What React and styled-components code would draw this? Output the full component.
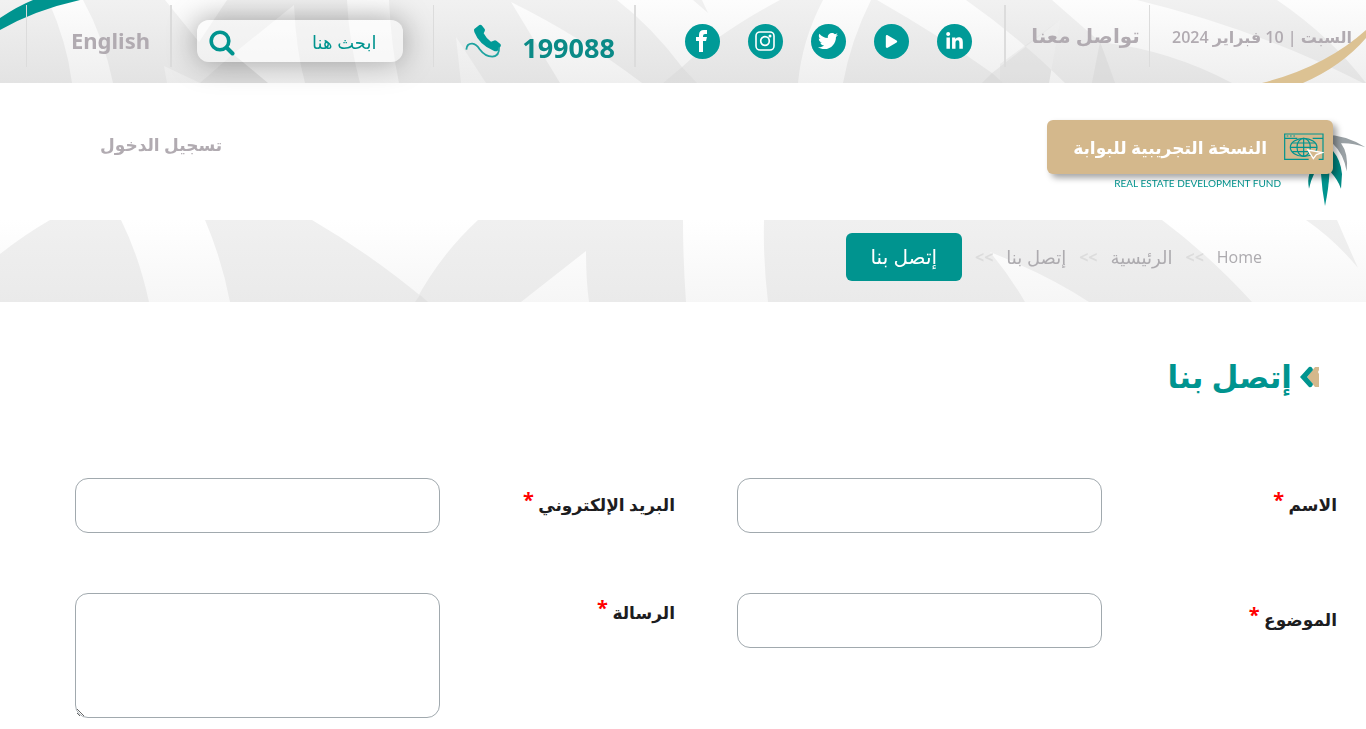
import React from "react";
import styled, { createGlobalStyle } from "styled-components";
import { FaTwitter, FaPlay, FaLinkedinIn } from "react-icons/fa";

const teal = "#00948f";
const muted = "#b1abb1";

const GlobalStyle = createGlobalStyle`
  *, *::before, *::after {
    box-sizing: border-box;
  }
  body {
    margin: 0;
    background: #fff;
    color: #1d1d1f;
    font-family: "Open Sans", "DejaVu Sans", sans-serif;
    overflow-x: hidden;
  }
  a {
    color: inherit;
    text-decoration: none;
  }
`;

const links = [
  { name: "LinkedIn", icon: <FaLinkedinIn size={19} /> },
  { name: "YouTube", icon: <FaPlay size={13} /> },
  { name: "Twitter", icon: <FaTwitter size={20} /> },
  { name: "Instagram", icon: <InstagramIcon /> },
  { name: "Facebook", icon: <FacebookIcon /> },
];

function InstagramIcon() {
  return (
    <svg width="20" height="20" viewBox="0 0 20 20" fill="none" stroke="#fff">
      <rect x="1" y="1" width="18" height="18" rx="4" strokeWidth="1.6" />
      <circle cx="10" cy="10" r="4.3" strokeWidth="1.7" />
      <circle cx="15" cy="5" r="1.5" fill="#fff" stroke="none" />
    </svg>
  );
}

function FacebookIcon() {
  return (
    <svg width="12" height="22" viewBox="0 0 12 22" fill="#fff">
      <path d="M3 22 V11 H0 V7 H3 V5 Q3 0 8 0 H11 V4 H9 Q7 4 7 6 V7 H11 L10 11 H7 V22Z" />
    </svg>
  );
}

const PhoneIcon = () => (
  <svg width="37" height="35" viewBox="0 0 111 105" aria-hidden="true">
    <path
      fill="#009a97"
      d="M28 15 L43 3 Q47 1 50 4 L59 15 Q61 18 59 22 L56 28 Q64 44 78 53 L86 50 Q90 47 94 50 L106 60 Q109 63 107 67 L98 80 Q93 83 86 80 Q43 63 28 24 Q26 17 28 15Z"
    />
    <path
      fill="none"
      stroke="#1fa3a0"
      strokeWidth="5.5"
      d="M4 77 Q5 58 22 59 Q34 60 44 76 Q60 98 82 98 Q104 96 102 70"
    />
  </svg>
);

const SearchIcon = () => (
  <svg width="26" height="26" viewBox="0 0 26 26" fill="none" stroke={teal}>
    <circle cx="11" cy="11" r="8.8" strokeWidth="3.6" />
    <path d="M18 18 L23.5 23.5" strokeWidth="4" strokeLinecap="round" />
  </svg>
);

const BetaIcon = () => (
  <svg width="40" height="28" viewBox="0 0 120 84" fill="none" stroke={teal} strokeWidth="3.6">
    <path d="M74 79 H2 V3 H117 V79 H104 M2 16 H40 M86 16 H117" />
    <path d="M8 9 H36" strokeDasharray="5 5" />
    <ellipse cx="59" cy="43" rx="40" ry="27" />
    <ellipse cx="59" cy="43" rx="20" ry="27" />
    <path d="M59 16 V70 M19 43 H99 M25 30 H93 M25 56 H93" />
    <path d="M72 51 L115 59 L97 65 L88 77 Z" fill="#d4b88c" stroke="#fff" strokeWidth="4" />
  </svg>
);

const PalmIcon = () => (
  <svg width="66" height="90" viewBox="810 60 198 270" aria-hidden="true">
    <path
      fill="#9aa1a5"
      d="M880 104 Q950 104 1006 142 Q965 128 933 130 Q956 160 950 214 Q942 162 906 128Z"
    />
    <path fill="#008a84" d="M890 130 L909 153 Q932 180 936 222 L933 266 Q924 240 902 216 Z" />
    <path fill="#008a84" d="M868 180 L838 222 Q832 240 837 266 Q842 242 852 222Z" />
    <path fill={teal} d="M878 180 L873 222 Q876 270 885 318 Q896 266 898 222 L892 180Z" />
  </svg>
);

const TitleArrow = () => (
  <svg width="19" height="22" viewBox="0 0 19 22" aria-hidden="true">
    <path fill="#d4b88c" d="M7 11 L15 1 H19 V4 L18 6 L19 8 V21 H15Z" />
    <path fill={teal} d="M0 11 L9 1 Q12 0 13 4 L7 11 L13 18 Q12 22 9 21Z" />
  </svg>
);

const TopPattern = () => (
  <Pattern viewBox="0 0 1366 83" preserveAspectRatio="none" aria-hidden="true">
    <defs>
      <linearGradient id="topShade" gradientUnits="userSpaceOnUse" x1="0" y1="0" x2="0" y2="83">
        <stop offset="0" stopColor="#fdfdfd" />
        <stop offset="1" stopColor="#efefef" />
      </linearGradient>
    </defs>
    <g fill="url(#topShade)">
      <path d="M48 0 H83 Q104 38 113 83 H72 Q67 42 48 0Z" />
      <path d="M165 0 H227 L199 42Z" />
      <path d="M294 5 Q296 50 305 83 H268 L233 54Z" />
      <path d="M164 66 L200 83 H167Z" opacity="0.6" />
      <path d="M347 0 H389 Q391 45 399 83 H360 Q349 42 347 0Z" />
      <path d="M511 2 Q580 36 642 83 H560Z" />
      <path d="M456 37 L486 83 H461Z" opacity="0.7" />
      <path d="M617 0 H693 L708 13 L702 0 H780 Q720 32 682 67 Q652 27 617 0Z" />
      <path d="M682 67 L697 83 H663Z" opacity="0.3" />
      <path d="M823 0 H871 Q851 40 843 83 H798 Q802 40 823 0Z" />
      <path d="M877 0 H966 Q1020 38 1065 83 H1049 L1060 20 L992 73 Q940 36 877 0Z" />
      <path d="M1052 0 H1137 Q1260 30 1363 83 H1232 Q1170 50 1100 42Z" />
      <path d="M1277 0 H1366 V83 Q1330 36 1277 0Z" />
    </g>
    <g fill="#d5d5d5" opacity="0.5">
      <path d="M682 67 L697 83 H663Z" />
      <path d="M233 54 L268 83 H200Z" />
      <path d="M992 73 L1003 83 H982Z" />
      <path d="M1100 42 Q1107 60 1115 83 H1092Z" />
      <path d="M1060 20 L1049 83 H1000 V64Z" opacity="0.6" />
    </g>
    <path fill={teal} d="M0 18 Q18 6 33 0 H80 Q35 10 0 30Z" />
    <path fill="#dcc293" d="M1262 83 Q1325 67 1366 30 V38 Q1342 66 1303 83Z" />
  </Pattern>
);

const CrumbPattern = () => (
  <Pattern viewBox="0 0 1366 82" preserveAspectRatio="none" aria-hidden="true">
    <defs>
      <linearGradient id="crumbShade" gradientUnits="userSpaceOnUse" x1="0" y1="0" x2="0" y2="82">
        <stop offset="0" stopColor="#f0f0f0" />
        <stop offset="1" stopColor="#eaeaea" />
      </linearGradient>
    </defs>
    <g fill="url(#crumbShade)">
      <path d="M0 34 Q24 15 50 0 H121 Q139 36 149 82 H0Z" />
      <path d="M205 0 H312 Q372 35 428 82 H230 Q222 40 205 0Z" />
      <path d="M478 0 H683 Q683 40 686 82 H589 Q586 60 586 31 L521 82 H415 Q440 35 478 0Z" />
      <path d="M764 0 H1162 Q1210 36 1252 82 H1089 Q1050 56 990 32 Q1010 56 1025 82 H768 Q763 40 764 0Z" />
      <path d="M1306 0 H1337 Q1350 30 1358 48 Q1335 20 1306 0Z" />
    </g>
    <path fill="#e2e2e2" d="M420 75 L428 82 H415Z" />
  </Pattern>
);

const App = () => {
  return (
    <Page dir="rtl" lang="ar">
      <GlobalStyle />
      <TopBar>
        <TopPattern />
        <TopCell>
          <DateText>السبت | 10 فبراير 2024</DateText>
        </TopCell>
        <TopCell $thick>
          <ContactLink href="#contact">تواصل معنا</ContactLink>
        </TopCell>
        <TopCell $thick>
          <SocialList>
            {links.map((link) => (
              <SocialLink key={link.name} href="#social" aria-label={link.name}>
                {link.icon}
              </SocialLink>
            ))}
          </SocialList>
        </TopCell>
        <TopCell>
          <Phone href="tel:199088">
            <span>199088</span>
            <PhoneIcon />
          </Phone>
        </TopCell>
        <TopCell $thick>
          <SearchBox role="search">
            <SearchInput type="text" placeholder="ابحث هنا" aria-label="ابحث هنا" />
            <SearchButton type="button" aria-label="بحث">
              <SearchIcon />
            </SearchButton>
          </SearchBox>
        </TopCell>
        <TopCell>
          <Language href="#en" lang="en">
            English
          </Language>
        </TopCell>
      </TopBar>

      <Header>
        <Logo href="#home">
          <PalmIcon />
          <LogoText dir="ltr">REAL ESTATE DEVELOPMENT FUND</LogoText>
        </Logo>
        <Beta>
          <BetaIcon />
          <span>النسخة التجريبية للبوابة</span>
        </Beta>
        <Login href="#login">تسجيل الدخول</Login>
      </Header>

      <Crumbs aria-label="breadcrumb">
        <CrumbPattern />
        <Crumb href="#home" lang="en">
          Home
        </Crumb>
        <Divider>&gt;&gt;</Divider>
        <Crumb href="#main">الرئيسية</Crumb>
        <Divider>&gt;&gt;</Divider>
        <Crumb href="#contact">إتصل بنا</Crumb>
        <Divider>&gt;&gt;</Divider>
        <CurrentCrumb href="#contact">إتصل بنا</CurrentCrumb>
      </Crumbs>

      <main>
        <Title>
          <TitleArrow />
          إتصل بنا
        </Title>
        <Form>
          <Field>
            <Label htmlFor="name">
              الاسم <Star>*</Star>
            </Label>
            <Input id="name" type="text" />
          </Field>
          <Field>
            <Label htmlFor="email">
              البريد الإلكتروني <Star>*</Star>
            </Label>
            <Input id="email" type="email" />
          </Field>
          <Field>
            <Label htmlFor="subject">
              الموضوع <Star>*</Star>
            </Label>
            <Input id="subject" type="text" />
          </Field>
          <Field>
            <Label htmlFor="message" $top>
              الرسالة <Star>*</Star>
            </Label>
            <TextArea id="message" />
          </Field>
        </Form>
      </main>
    </Page>
  );
};

const Page = styled.div`
  width: 100%;
`;

const Pattern = styled.svg`
  position: absolute;
  inset: 0;
  width: 100%;
  height: 100%;
  z-index: -1;
`;

const TopBar = styled.div`
  position: relative;
  isolation: isolate;
  display: grid;
  grid-template-columns: 217fr 145fr 370fr 201fr 263fr 144fr 26fr;
  height: 83px;
  padding-top: 5px;
  background: linear-gradient(#f1f1f1, #e3e3e3);
`;

const TopCell = styled.div`
  display: flex;
  align-items: center;
  justify-content: center;
  height: 62px;
  padding-top: 10px;
  border-left: ${(props) => (props.$thick ? 2 : 1)}px solid #dcdcdc;
`;

const DateText = styled.span`
  margin-bottom: 8px;
  padding-left: 8px;
  color: ${muted};
  font-size: 16px;
  font-weight: 600;
  white-space: nowrap;
`;

const ContactLink = styled.a`
  margin-bottom: 12px;
  padding-left: 16px;
  color: ${muted};
  font-size: 20px;
  font-weight: 700;
  white-space: nowrap;
`;

const SocialList = styled.div`
  display: flex;
  gap: 28px;
  padding-left: 16px;
`;

const SocialLink = styled.a`
  display: flex;
  align-items: center;
  justify-content: center;
  width: 35px;
  height: 35px;
  border-radius: 50%;
  background: #009a97;
  color: #fff;
`;

const Phone = styled.a`
  display: flex;
  align-items: center;
  gap: 20px;
  padding-left: 12px;
  color: #0b8a87;
  font-size: 27px;
  font-weight: 700;
  line-height: 36px;

  span {
    padding-top: 14px;
  }
`;

const SearchBox = styled.div`
  display: flex;
  align-items: center;
  justify-content: space-between;
  width: 206px;
  height: 42px;
  margin-right: 6px;
  padding: 0 26px 0 12px;
  border-radius: 12px;
  background: rgba(255, 255, 255, 0.4);
  box-shadow: 0 0 30px rgba(0, 0, 0, 0.35);
`;

const SearchInput = styled.input`
  width: 120px;
  padding: 2px 0 0;
  border: 0;
  outline: 0;
  background: transparent;
  color: ${teal};
  font-family: inherit;
  font-size: 18px;

  &::placeholder {
    color: ${teal};
    opacity: 1;
  }
`;

const SearchButton = styled.button`
  display: flex;
  padding: 4px 0 0;
  border: 0;
  background: none;
  cursor: pointer;
`;

const Language = styled.a`
  margin-bottom: 2px;
  padding-left: 24px;
  color: ${muted};
  font-family: "Noto Sans", sans-serif;
  font-size: 22px;
  font-weight: 700;
`;

const Header = styled.header`
  position: relative;
  display: flex;
  justify-content: space-between;
  height: 137px;
`;

const Logo = styled.a`
  display: flex;
  gap: 19px;
  padding-top: 37px;
`;

const LogoText = styled.span`
  padding-top: 56px;
  color: ${teal};
  font-family: Lato, sans-serif;
  font-size: 10px;
  line-height: 14px;
  white-space: nowrap;
`;

const Beta = styled.div`
  position: absolute;
  top: 37px;
  right: 33px;
  display: flex;
  align-items: center;
  gap: 17px;
  width: 286px;
  height: 54px;
  padding: 0 9px;
  border-radius: 6px;
  background: #d4b88c;
  box-shadow: 4px 4px 6px rgba(0, 0, 0, 0.35);
  color: #fff;
  font-size: 17px;
  font-weight: 700;
  white-space: nowrap;
`;

const Login = styled.a`
  padding: 50px 0 0 100px;
  color: ${muted};
  font-size: 17px;
  font-weight: 600;
`;

const Crumbs = styled.nav`
  position: relative;
  isolation: isolate;
  display: flex;
  align-items: center;
  gap: 13px;
  height: 82px;
  padding: 0 104px 8px 0;
  background: linear-gradient(#fff, #f6f6f6);
`;

const Crumb = styled.a`
  color: #adabaf;
  font-size: ${(props) => (props.lang ? 16 : 18)}px;
`;

const Divider = styled.span`
  color: #dcdcdc;
  font-size: 16px;
  font-weight: 700;
`;

const CurrentCrumb = styled.a`
  padding: 0 25px;
  border-radius: 6px;
  background: ${teal};
  color: #fff;
  font-size: 20px;
  line-height: 48px;
`;

const Title = styled.h1`
  display: flex;
  align-items: center;
  gap: 8px;
  margin: 51px 47px 78px 0;
  color: ${teal};
  font-size: 31px;
  font-weight: 600;
  line-height: 47px;
`;

const Form = styled.form`
  display: grid;
  grid-template-columns: 1fr 1fr;
  gap: 60px 62px;
  padding: 0 29px 11px 75px;
`;

const Field = styled.div`
  display: grid;
  grid-template-columns: 235fr 365fr;
  align-items: start;
`;

const Label = styled.label`
  padding-top: ${(props) => (props.$top ? 4 : 11)}px;
  font-size: 17px;
  font-weight: 600;
  line-height: 32px;
`;

const Star = styled.span`
  color: #f00;
  font-size: 20px;
  font-weight: 700;
  vertical-align: 4px;
  line-height: 20px;
`;

const Input = styled.input`
  width: 100%;
  height: 55px;
  padding: 0 14px;
  border: 1px solid #a1a9ae;
  border-radius: 13px;
  background: #fff;
  font: inherit;
`;

const TextArea = styled.textarea`
  display: block;
  width: 100%;
  height: 125px;
  padding: 10px 14px;
  border: 1px solid #a1a9ae;
  border-radius: 13px;
  background: #fff;
  font: inherit;
  resize: both;
`;

export default App;
